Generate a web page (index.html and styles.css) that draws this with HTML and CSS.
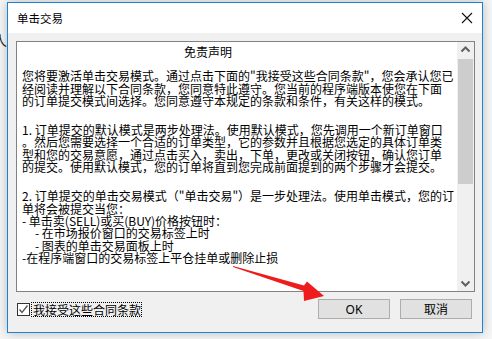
FILE: index.html
```html
<!DOCTYPE html>
<html lang="zh-CN">
<head>
  <meta charset="UTF-8">
  <title>单击交易</title>
  <link rel="stylesheet" href="styles.css">
</head>
<body>
  <div class="behind">
    <span class="behind-char">人</span>
  </div>

  <div class="dialog">
    <div class="titlebar">
      <span class="title">单击交易</span>
      <svg class="close" width="12" height="12" viewBox="0 0 12 12">
        <path d="M1 1 L11 11 M11 1 L1 11" stroke="#111" stroke-width="1.1" fill="none"/>
      </svg>
    </div>

    <div class="body">
      <div class="textbox">
        <div class="doc">
          <div class="doc-title">免责声明</div>
          <p>
            您将要激活单击交易模式。通过点击下面的"我接受这些合同条款"，您会承认您已<br>
            经阅读并理解以下合同条款，您同意特此遵守。您当前的程序端版本使您在下面<br>
            的订单提交模式间选择。您同意遵守本规定的条款和条件，有关这样的模式。
          </p>
          <p>
            1. 订单提交的默认模式是两步处理法。使用默认模式，您先调用一个新订单窗口<br>
            。然后您需要选择一个合适的订单类型，它的参数并且根据您选定的具体订单类<br>
            型和您的交易意愿，通过点击买入，卖出，下单，更改或关闭按钮，确认您订单<br>
            的提交。使用默认模式，您的订单将直到您完成前面提到的两个步骤才会提交。
          </p>
          <p>
            2. 订单提交的单击交易模式（"单击交易"）是一步处理法。使用单击模式，您的订<br>
            单将会被提交当您：<br>
            - 单击卖(SELL)或买(BUY)价格按钮时：<br>
            <span class="sub">- 在市场报价窗口的交易标签上时</span><br>
            <span class="sub">- 图表的单击交易面板上时</span><br>
            -在程序端窗口的交易标签上平仓挂单或删除止损
          </p>
        </div>

        <div class="scrollbar">
          <div class="scroll-btn">
            <svg width="17" height="16" viewBox="0 0 17 16">
              <path d="M4.5 9.5 L8.5 5.5 L12.5 9.5" stroke="#606060" stroke-width="2" fill="none"/>
            </svg>
          </div>
          <div class="track">
            <div class="thumb"></div>
          </div>
          <div class="scroll-btn">
            <svg width="17" height="16" viewBox="0 0 17 16">
              <path d="M4.5 6.5 L8.5 10.5 L12.5 6.5" stroke="#606060" stroke-width="2" fill="none"/>
            </svg>
          </div>
        </div>
      </div>

      <div class="footer">
        <label class="agree">
          <span class="checkbox">
            <svg width="11" height="11" viewBox="0 0 11 11">
              <path d="M1.5 5.5 L4 8.5 L9.5 1.5" stroke="#555" stroke-width="1.3" fill="none"/>
            </svg>
          </span>
          <span class="agree-text">我接受这些合同条款</span>
        </label>
        <div class="buttons">
          <button class="btn">OK</button>
          <button class="btn">取消</button>
        </div>
      </div>
    </div>
  </div>

  <svg class="mark" width="492" height="339" viewBox="0 0 492 339">
    <polygon points="233,266 304,285.5 307,281.5 324,296 304,301 303.5,291 233,267" fill="#ee1c1c"/>
  </svg>
</body>
</html>
```

FILE: styles.css
```css
body {
  margin: 0;
  width: 492px;
  height: 339px;
  display: flex;
  background: #f6f6f6;
  font-family: "Noto Sans CJK SC", "Noto Sans", sans-serif;
  overflow: hidden;
}

.behind {
  width: 7px;
  overflow: hidden;
  padding-top: 30px;
}

.behind-char {
  display: block;
  margin-left: -7px;
  font-size: 14px;
  color: #222;
}

.dialog {
  margin-top: 2px;
  width: 474px;
  height: 329px;
  border: 1px solid #1883d7;
  box-shadow: 0 0 10px rgba(0, 0, 0, 0.25);
  display: flex;
  flex-direction: column;
  background: #f0f0f0;
}

.titlebar {
  height: 30px;
  background: #fff;
  display: flex;
  align-items: center;
  justify-content: space-between;
  padding: 0 9px;
}

.title {
  font-size: 11.5px;
  color: #000;
}

.close {
  margin-right: 0;
}

.body {
  flex: 1;
  padding: 8px 7px 0 8px;
}

.textbox {
  height: 249px;
  border: 1px solid #828282;
  background: #fff;
  display: flex;
}

.doc {
  flex: 1;
  padding: 4px 0 0 5px;
  font-size: 12px;
  line-height: 12.3px;
  color: #000;
  white-space: nowrap;
  overflow: hidden;
}

.doc-title {
  padding-left: 162px;
  margin-bottom: 12px;
}

.doc p {
  margin: 0 0 17px;
}

.sub {
  padding-left: 13px;
}

/* scrollbar */
.scrollbar {
  width: 17px;
  background: #f0f0f0;
  display: flex;
  flex-direction: column;
}

.scroll-btn {
  height: 16px;
  display: flex;
}

.track {
  flex: 1;
}

.thumb {
  margin: 1px 1px 0;
  height: 125px;
  background: #cdcdcd;
}

/* footer */
.footer {
  margin-top: 7px;
  display: flex;
  align-items: center;
  justify-content: space-between;
  padding: 0 3px 0 1px;
}

.agree {
  display: flex;
  align-items: center;
  gap: 2px;
}

.checkbox {
  width: 11px;
  height: 11px;
  border: 1px solid #333;
  background: #fff;
  display: flex;
}

.agree-text {
  font-size: 12px;
  line-height: 12px;
  padding: 1px 0 0 1px;
  outline: 1px dotted #000;
}

.buttons {
  display: flex;
  gap: 10px;
}

.btn {
  width: 72px;
  height: 20px;
  padding: 0;
  border: 1px solid #adadad;
  background: #e1e1e1;
  font-family: "Noto Sans", "Noto Sans CJK SC", sans-serif;
  font-size: 12px;
  color: #000;
}

.mark {
  position: absolute;
  left: 0;
  top: 0;
  pointer-events: none;
}
```
